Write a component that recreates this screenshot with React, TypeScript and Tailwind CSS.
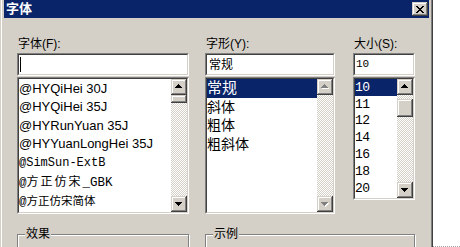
import React from 'react';

const raised =
  'bg-[#d4d0c8] shadow-[inset_-1px_-1px_0_#404040,inset_1px_1px_0_#d4d0c8,inset_-2px_-2px_0_#808080,inset_2px_2px_0_#ffffff]';
const checker =
  'bg-[image:repeating-conic-gradient(#d4d0c8_0%_25%,#ffffff_0%_50%)] bg-[length:2px_2px]';

function Arrow({ up, disabled }: { up?: boolean; disabled?: boolean }) {
  const d = up
    ? 'M3 0h1v1h-1z M2 1h3v1h-3z M1 2h5v1h-5z M0 3h7v1h-7z'
    : 'M0 0h7v1h-7z M1 1h5v1h-5z M2 2h3v1h-3z M3 3h1v1h-1z';
  return (
    <svg width="8" height="5" viewBox="0 0 8 5" shapeRendering="crispEdges">
      {disabled && <path d={d} fill="#ffffff" transform="translate(1 1)" />}
      <path d={d} fill={disabled ? '#808080' : '#000000'} />
    </svg>
  );
}

function ScrollBar({ thumbTop, thumbH, disabled }: { thumbTop?: number; thumbH?: number; disabled?: boolean }) {
  return (
    <div className="w-[16px] h-full flex flex-col shrink-0">
      <div className={`${raised} h-[16px] flex items-center justify-center pb-[1px]`}>
        <Arrow up disabled={disabled} />
      </div>
      <div className={`flex-1 ${checker}`}>
        {thumbH ? <div className={raised} style={{ marginTop: thumbTop, height: thumbH }} /> : null}
      </div>
      <div className={`${raised} h-[16px] flex items-center justify-center pt-[1px]`}>
        <Arrow disabled={disabled} />
      </div>
    </div>
  );
}

function Sunken({ className, children }: { className: string; children?: React.ReactNode }) {
  return (
    <div className={`border border-t-[#808080] border-l-[#808080] border-r-white border-b-white ${className}`}>
      <div className="w-full h-full border border-t-[#404040] border-l-[#404040] border-r-[#d4d0c8] border-b-[#d4d0c8] bg-white flex overflow-hidden">
        {children}
      </div>
    </div>
  );
}

function Group({ label, className }: { label: string; className: string }) {
  return (
    <div className={`relative h-[40px] border border-[#808080] shadow-[inset_1px_1px_0_#ffffff,1px_1px_0_#ffffff] ${className}`}>
      <span className="absolute -top-[8px] left-[7px] px-[1px] bg-[#d4d0c8] text-[12px] leading-[15px] text-black">
        {label}
      </span>
    </div>
  );
}

const mono = "font-['Liberation_Mono','Noto_Sans_CJK_SC',monospace]";

export default function App() {
  const fontRows: React.ReactNode[] = [
    <span className="text-[13px]">@HYQiHei 30J</span>,
    <span className="text-[13px]">@HYQiHei 35J</span>,
    <span className="text-[13px]">@HYRunYuan 35J</span>,
    <span className="text-[13px]">@HYYuanLongHei 35J</span>,
    <span className={`${mono} text-[12px]`}>@SimSun-ExtB</span>,
    <span>
      <span className={`${mono} text-[12.5px]`}>@</span>
      <span className="text-[12px] tracking-[2px]">方正仿宋</span>
      <span className={`${mono} text-[12.5px]`}>_GBK</span>
    </span>,
    <span>
      <span className={`${mono} text-[12.5px]`}>@</span>
      <span className="text-[11.5px]">方正仿宋简体</span>
    </span>,
  ];
  const styles = ['斜体', '粗体', '粗斜体'];
  const sizes = ['11', '12', '14', '16', '18', '20'];

  return (
    <div className="w-[460px] h-[247px] flex bg-white overflow-hidden font-['Liberation_Sans','Noto_Sans_CJK_SC',sans-serif] text-black">
      <div className="w-[433px] h-full shrink-0 flex flex-col px-[4px] bg-[#d4d0c8] shadow-[inset_1px_0_0_#d4d0c8,inset_2px_0_0_#ffffff,inset_-1px_0_0_#404040,inset_-2px_0_0_#808080]">
        {/* title bar */}
        <div className="h-[18px] shrink-0 bg-[#0a246a] flex items-center justify-between pl-[2px] pr-[1px]">
          <span className="text-white text-[13px] font-bold leading-[18px]">字体</span>
          <div className={`${raised} w-[16px] h-[14px] flex items-center justify-center`}>
            <svg width="8" height="7" viewBox="0 0 8 7" shapeRendering="crispEdges">
              <path
                d="M0 0h2v1h-2z M6 0h2v1h-2z M1 1h2v1h-2z M5 1h2v1h-2z M2 2h4v1h-4z M3 3h2v1h-2z M2 4h4v1h-4z M1 5h2v1h-2z M5 5h2v1h-2z M0 6h2v1h-2z M6 6h2v1h-2z"
                fill="#000"
              />
            </svg>
          </div>
        </div>

        <div className="flex flex-col pl-[13px] pt-[19px]">
          <div className="flex items-start">
            {/* font name */}
            <div className="w-[172px] flex flex-col">
              <div className="h-[15px] leading-[15px] text-[12px] pl-[1px]">字体(F):</div>
              <Sunken className="mt-[1px] h-[23px]">
                <div className="ml-[1px] mt-[2px] w-[1px] h-[15px] bg-black" />
              </Sunken>
              <Sunken className="mt-[1px] h-[137px]">
                <div className="flex-1 flex flex-col">
                  {fontRows.map((r, i) => (
                    <div key={i} className="h-[18.6px] flex items-center whitespace-nowrap">
                      {r}
                    </div>
                  ))}
                </div>
                <ScrollBar thumbTop={0} thumbH={8} />
              </Sunken>
            </div>

            {/* style */}
            <div className="w-[130px] ml-[16px] flex flex-col">
              <div className="h-[15px] leading-[15px] text-[12px] pl-[1px]">字形(Y):</div>
              <Sunken className="mt-[1px] h-[23px]">
                <div className="pl-[2px] flex items-center text-[12px]">常规</div>
              </Sunken>
              <Sunken className="mt-[1px] h-[137px]">
                <div className="flex-1 flex flex-col">
                  <div className="h-[19px] bg-[#0a246a] text-white text-[15px] flex items-center">常规</div>
                  {styles.map((s) => (
                    <div key={s} className="h-[18.6px] text-[14px] flex items-center">
                      {s}
                    </div>
                  ))}
                </div>
                <ScrollBar disabled />
              </Sunken>
            </div>

            {/* size */}
            <div className="w-[62px] ml-[18px] flex flex-col">
              <div className="h-[15px] leading-[15px] text-[12px] pl-[1px]">大小(S):</div>
              <Sunken className="mt-[1px] h-[23px]">
                <div className={`pl-[1px] flex items-center text-[11px] ${mono}`}>10</div>
              </Sunken>
              <Sunken className="mt-[1px] h-[123px]">
                <div className={`flex-1 flex flex-col ${mono} text-[13px] tracking-[-0.6px]`}>
                  <div className="h-[17px] bg-[#0a246a] text-white flex items-center">10</div>
                  {sizes.map((s) => (
                    <div key={s} className="h-[16.8px] flex items-center">
                      {s}
                    </div>
                  ))}
                </div>
                <ScrollBar thumbTop={4} thumbH={18} />
              </Sunken>
            </div>
          </div>

          <div className="flex mt-[20px]">
            <Group label="效果" className="w-[172px]" />
            <Group label="示例" className="w-[210px] ml-[16px]" />
          </div>
        </div>
      </div>
      <div className="flex-1 flex flex-col justify-end">
        <div className="border-b border-dotted border-[#a0a0a0]" />
      </div>
    </div>
  );
}
